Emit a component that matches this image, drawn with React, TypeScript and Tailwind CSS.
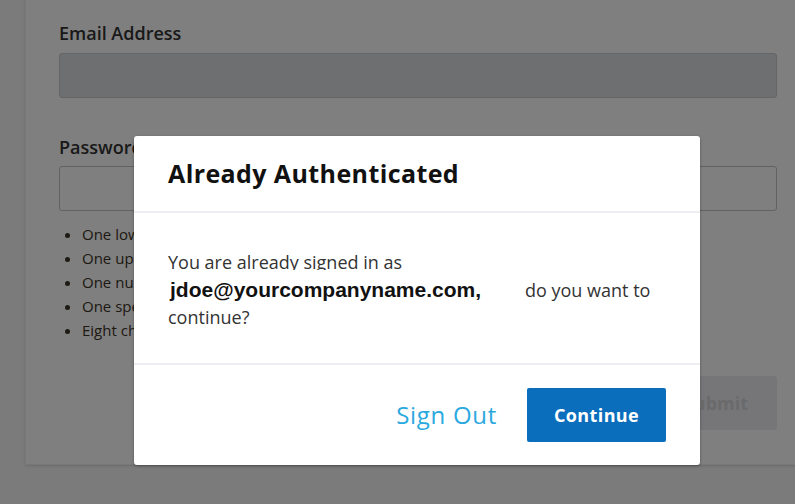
import { useState } from "react";

const rules = [
  "One lowercase character",
  "One uppercase character",
  "One number",
  "One special character",
  "Eight characters minimum",
];

export default function App() {
  const [email] = useState("jdoe@yourcompanyname.com,");

  return (
    <div className="relative h-[504px] w-[795px] overflow-hidden bg-[#f6f6f6] font-['Open_Sans',sans-serif]">
      {/* form behind the dialog */}
      <div className="pl-[25px]">
        <div className="w-[800px] border-b border-l border-[#f0f0f0] bg-white pb-[34px] pl-[33px] pr-[24px] pt-[21px] shadow-sm">
          <div className="text-[18px] font-semibold leading-[24px] text-[#333]">
            Email Address
          </div>
          <div className="mt-[8px] h-[45px] w-[718px] rounded-[3px] border border-[#c9cbcf] bg-[#dcdee2]" />

          <div className="mt-[37px] text-[18px] font-semibold leading-[24px] text-[#333]">
            Password
          </div>
          <div className="mt-[7px] h-[45px] w-[718px] rounded-[3px] border border-[#c4c4c4] bg-white" />

          <ul className="mt-[11px] list-disc pl-[23px] text-[15px] leading-[24px] text-[#3a3226]">
            {rules.map((r) => (
              <li key={r}>{r}</li>
            ))}
          </ul>

          <div className="mt-[34px] flex w-[718px] justify-end">
            <button className="h-[54px] w-[122px] rounded-[3px] bg-[#ececf0] text-[18px] font-bold text-[#d4d4d8]">
              Submit
            </button>
          </div>
        </div>
      </div>

      {/* overlay */}
      <div className="absolute inset-0 bg-black/50" />

      {/* dialog */}
      <div className="absolute left-[134px] top-[136px] flex h-[329px] w-[566px] flex-col rounded-[3px] bg-white shadow-[0_1px_3px_rgba(0,0,0,0.35)]">
        <div className="flex h-[77px] items-center border-b-2 border-[#eceef2] px-[34px]">
          <h2 className="text-[25px] font-bold tracking-[0.4px] text-[#111]">
            Already Authenticated
          </h2>
        </div>

        <div className="flex-1 border-b-2 border-[#eceef2] px-[34px] pt-[36px] text-[18px] leading-[27px] text-[#333]">
          <div className="h-[27px]">
            <div className="h-[21px] overflow-hidden">
              You are already signed in as
            </div>
          </div>
          <div>
            <span className="inline-block w-[357px] pl-[2px] font-['Liberation_Sans',Arial,sans-serif] text-[21px] font-bold text-[#111]">
              {email}
            </span>
            do you want to
          </div>
          <div>continue?</div>
        </div>

        <div className="flex h-[100px] items-center justify-end gap-[30px] px-[34px]">
          <button className="text-[24px] tracking-[0.7px] text-[#2aa9e0]">
            Sign Out
          </button>
          <button className="h-[54px] w-[139px] rounded-[2px] bg-[#0a6ebd] text-[18px] font-bold tracking-[0.4px] text-white">
            Continue
          </button>
        </div>
      </div>
    </div>
  );
}
